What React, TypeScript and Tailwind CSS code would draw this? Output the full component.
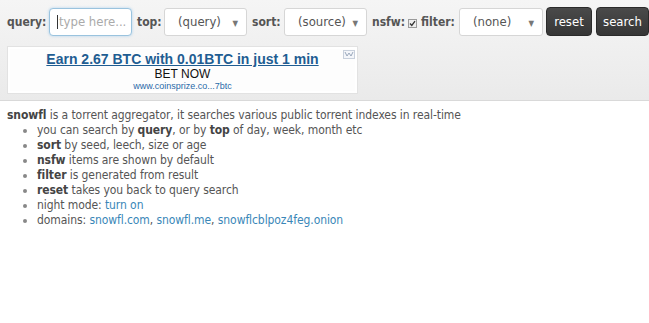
import React from "react";

const Select = ({ label, w }: { label: string; w: string }) => (
  <div className={`relative flex h-[28px] ${w} items-center rounded-[3px] border border-[#d6d6d6] bg-white pl-[13px] text-[13px] text-[#555]`}>
    <span>{label}</span>
    <span className="absolute right-[8px] top-[9px] text-[8px] text-[#777]">▼</span>
  </div>
);

export default function App() {
  const font = { fontFamily: "Tahoma, 'DejaVu Sans Condensed', 'DejaVu Sans', sans-serif" };
  return (
    <div className="min-h-[323px] w-[649px] bg-white" style={font}>
      <div className="border-b border-[#d9d9d9] bg-gradient-to-b from-[#f5f5f5] to-[#eaeaea] pb-[6px] pt-[7px]">
        <div className="flex items-center pl-[7px] text-[13px]">
          <span className="w-[38px] text-[12px] font-bold text-[#555]">query:</span>
          <div className="ml-[4px] flex h-[28px] w-[83px] items-center rounded-[4px] border border-[#9ac3de] bg-white pl-[7px] text-[#aaa] shadow-[0_0_3px_rgba(82,168,236,0.4)]">
            <span className="mr-[1px] inline-block h-[14px] w-px bg-[#333]" />
            type here...
          </div>
          <span className="ml-[5px] w-[23px] text-[12px] font-bold text-[#555]">top:</span>
          <span className="w-[4px]" />
          <Select label="(query)" w="w-[83px]" />
          <span className="ml-[5px] w-[28px] text-[12px] font-bold text-[#555]">sort:</span>
          <span className="w-[4px]" />
          <Select label="(source)" w="w-[83px]" />
          <span className="ml-[5px] text-[12px] font-bold text-[#555]">nsfw:</span>
          <svg className="ml-[3px] mt-[4px] shrink-0" width="9" height="9" viewBox="0 0 9 9">
            <rect x="0.5" y="0.5" width="8" height="8" fill="#ededed" stroke="#9a9a9a" />
            <path d="M2 4.5 L3.8 6.5 L7 2.2" stroke="#333" strokeWidth="1.3" fill="none" />
          </svg>
          <span className="ml-[4px] text-[12px] font-bold text-[#555]">filter:</span>
          <span className="w-[4px]" />
          <Select label="(none)" w="w-[84px]" />
          <button className="ml-[3px] h-[29px] w-[46px] rounded-[4px] border border-[#2a2a2a] bg-gradient-to-b from-[#4a4a4a] to-[#363636] text-[13px] text-white">reset</button>
          <button className="ml-[4px] h-[29px] w-[53px] rounded-[4px] border border-[#2a2a2a] bg-gradient-to-b from-[#4a4a4a] to-[#363636] text-[13px] text-white">search</button>
        </div>
        <div className="ml-[7px] mt-[10px] w-[351px] border border-[#e2e2e2] bg-white p-[2px]">
          <div className="relative flex h-[42px] flex-col items-center bg-[#fdfdfd]" style={{ fontFamily: "'Liberation Sans', Arial, sans-serif" }}>
            <a className="mt-[2px] text-[14px] font-bold leading-[17px] text-[#1f5d92] underline">Earn 2.67 BTC with 0.01BTC in just 1 min</a>
            <span className="text-[12px] leading-[13px] text-[#111]">BET NOW</span>
            <span className="text-[9px] leading-[11px] text-[#2a6aa8]">www.coinsprize.co...7btc</span>
            <svg className="absolute right-[0px] top-[1px]" width="12" height="9" viewBox="0 0 12 9">
              <rect x="0.5" y="0.5" width="11" height="8" fill="#f4f6fa" stroke="#c8d0dc" />
              <path d="M2 2 L4 6 L6 3 L8 6 L10 2" stroke="#9aa8bc" fill="none" />
            </svg>
          </div>
        </div>
      </div>
      <div className="px-[7px] pt-[7px] text-[12px] leading-[15px] tracking-[-0.08px] text-[#555]">
        <div><b className="text-[#444]">snowfl</b> is a torrent aggregator, it searches various public torrent indexes in real-time</div>
        <ul className="list-disc pl-[30px] marker:text-[#888]">
          <li>you can search by <b className="text-[#444]">query</b>, or by <b className="text-[#444]">top</b> of day, week, month etc</li>
          <li><b className="text-[#444]">sort</b> by seed, leech, size or age</li>
          <li><b className="text-[#444]">nsfw</b> items are shown by default</li>
          <li><b className="text-[#444]">filter</b> is generated from result</li>
          <li><b className="text-[#444]">reset</b> takes you back to query search</li>
          <li>night mode: <a className="text-[#3a87b8]">turn on</a></li>
          <li>domains: <a className="text-[#3a87b8]">snowfl.com</a>, <a className="text-[#3a87b8]">snowfl.me</a>, <a className="text-[#3a87b8]">snowflcblpoz4feg.onion</a></li>
        </ul>
      </div>
    </div>
  );
}
